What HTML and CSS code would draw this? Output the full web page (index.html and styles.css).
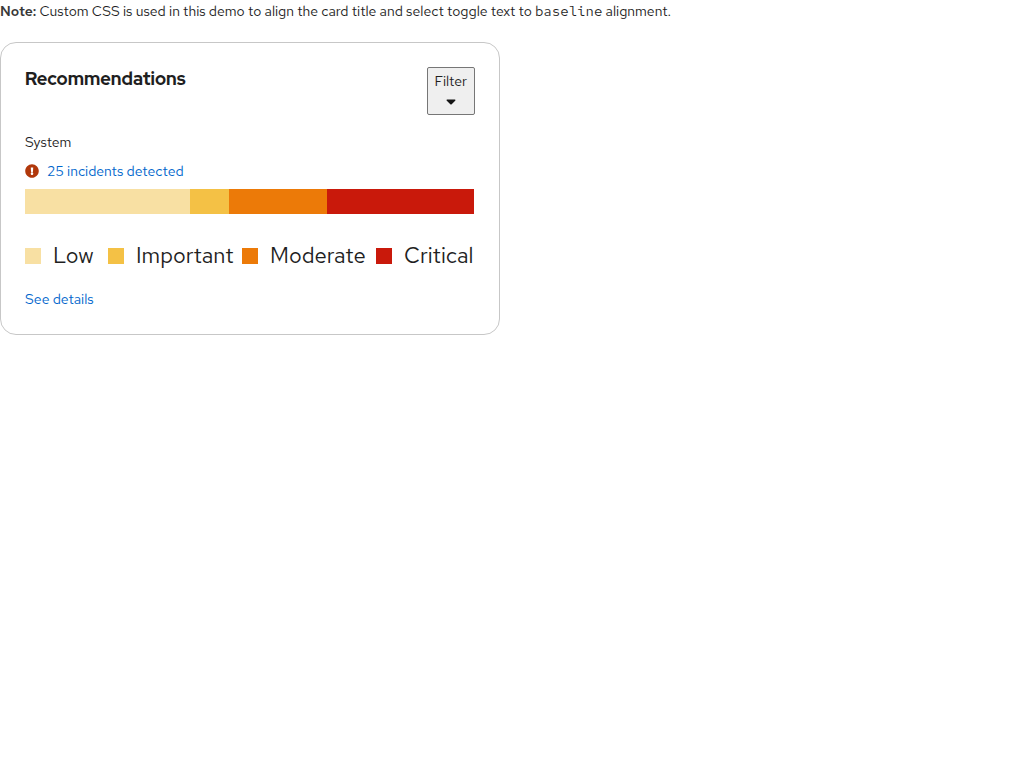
FILE: index.html
```html
<!DOCTYPE html>
<html lang="en">
<head>
  <meta charset="utf-8">
  <meta name="viewport" content="width=device-width, initial-scale=1">
  <title>Recommendations</title>
  <link rel="stylesheet" href="styles.css">
</head>
<body>
  <p class="note"><strong>Note:</strong> Custom CSS is used in this demo to align the card title and select toggle text to <code>baseline</code> alignment.</p>
  <main class="card">
    <header class="card-header">
      <h2 class="card-title">Recommendations</h2>
      <button class="toggle" type="button" aria-expanded="false">
        <span>Filter</span>
        <svg class="caret" viewBox="0 0 10 6" aria-hidden="true"><path d="M1.3 0.5h7.4c.7 0 1 .7.5 1.200L5.700 5.200a1 1 0 0 1-1.400 0L.8 1.700C.3 1.200.6.500 1.300.500z"/></svg>
      </button>
    </header>
    <div class="system">System</div>
    <div class="incidents">
      <svg class="status-icon" viewBox="0 0 512 512" aria-hidden="true"><path d="M504 256c0 136.997-111.043 248-248 248S8 392.997 8 256C8 119.083 119.043 8 256 8s248 111.083 248 248zm-248 50c-25.405 0-46 20.595-46 46s20.595 46 46 46 46-20.595 46-46-20.595-46-46-46zm-43.673-165.346l7.418 136c.347 6.364 5.609 11.346 11.982 11.346h48.546c6.373 0 11.635-4.982 11.982-11.346l7.418-136c.375-6.874-5.098-12.654-11.982-12.654h-63.383c-6.884 0-12.356 5.780-11.981 12.654z"/></svg>
      <a class="link" href="#">25 incidents detected</a>
    </div>
    <div class="bar" role="img" aria-label="Incidents by severity">
      <span class="low"></span><span class="important"></span><span class="moderate"></span><span class="critical"></span>
    </div>
    <ul class="legend">
      <li class="legend-item"><span class="swatch low"></span>Low</li>
      <li class="legend-item"><span class="swatch important"></span>Important</li>
      <li class="legend-item"><span class="swatch moderate"></span>Moderate</li>
      <li class="legend-item"><span class="swatch critical"></span>Critical</li>
    </ul>
    <footer class="card-footer"><a class="link" href="#">See details</a></footer>
  </main>
</body>
</html>
```
FILE: styles.css
```css
* {
  box-sizing: border-box;
}

body {
  margin: 0;
  background: #fff;
  color: #1f1f1f;
  font: 14px/21px "Red Hat Text", Inter, "Open Sans", sans-serif;
}

.note {
  margin: 0 0 20px;
  padding-top: 1px;
}

.note strong {
  font-weight: 600;
  color: #383838;
}

.note code {
  font: 14px/20px "Red Hat Mono", "Liberation Mono", monospace;
}

.card {
  max-width: 500px;
  padding: 24px;
  border: 1px solid #c7c7c7;
  border-radius: 16px;
}

.card-header {
  display: flex;
  align-items: flex-start;
  justify-content: space-between;
}

.card-title {
  margin: 0;
  font-family: "Red Hat Display", "Red Hat Text", Inter, sans-serif;
  font-size: 18px;
  line-height: 24px;
  font-weight: 800;
}

.toggle {
  display: flex;
  flex-direction: column;
  align-items: center;
  gap: 7px;
  height: 48px;
  padding: 3px 7px;
  border: 1px solid #767676;
  border-radius: 2px;
  background: #efefef;
  color: #1f1f1f;
  font: inherit;
}

.caret {
  width: 10px;
  height: 6px;
  fill: #151515;
}

.system {
  margin-top: 17px;
}

.incidents {
  display: flex;
  align-items: flex-start;
  gap: 8px;
  margin-top: 8px;
}

.status-icon {
  width: 14px;
  height: 14px;
  margin-top: 3px;
  fill: #b1380b;
}

.link {
  color: #0066cc;
  text-decoration: none;
}

.bar {
  display: grid;
  grid-template-columns: 165fr 39fr 98fr 147fr;
  height: 25px;
  margin: 7px 1px 0 0;
}

.low {
  background: #f8e0a3;
}

.important {
  background: #f4c145;
}

.moderate {
  background: #ec7a08;
}

.critical {
  background: #c9190b;
}

.legend {
  display: grid;
  grid-template-columns: 83fr 134fr 134fr 99fr;
  margin: 26px 0 0;
  padding: 0;
  list-style: none;
  font-size: 22px;
  line-height: 31px;
}

.legend-item {
  display: flex;
  align-items: center;
  gap: 12px;
  white-space: nowrap;
}

.swatch {
  flex: none;
  width: 16px;
  height: 16px;
}

.card-footer {
  margin-top: 18px;
}
```
